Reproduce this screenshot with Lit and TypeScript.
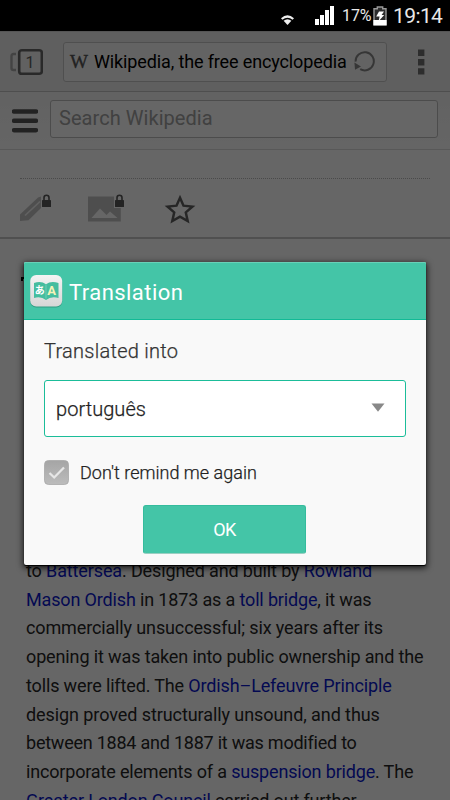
import { LitElement, html, css, svg } from 'lit';
import { customElement, property } from 'lit/decorators.js';
import { styleMap } from 'lit/directives/style-map.js';

type Run = string | { link: string };

interface Line {
  tracking: number;
  runs: Run[];
}

const ARTICLE: Line[] = [
  { tracking: -0.129, runs: ['to ', { link: 'Battersea' }, '. Designed and built by ', { link: 'Rowland' }] },
  { tracking: -0.155, runs: [{ link: 'Mason Ordish' }, ' in 1873 as a ', { link: 'toll bridge' }, ', it was'] },
  { tracking: -0.135, runs: ['commercially unsuccessful; six years after its'] },
  { tracking: -0.128, runs: ['opening it was taken into public ownership and the'] },
  { tracking: -0.145, runs: ['tolls were lifted. The ', { link: 'Ordish–Lefeuvre Principle' }] },
  { tracking: -0.08, runs: ['design proved structurally unsound, and thus'] },
  { tracking: -0.232, runs: ['between 1884 and 1887 it was modified to'] },
  { tracking: -0.17, runs: ['incorporate elements of a ', { link: 'suspension bridge' }, '. The'] },
  { tracking: -0.165, runs: [{ link: 'Greater London Council' }, ' carried out further'] },
];

const lock = (x: number) => svg`
  <rect x=${x} y="6" width="9" height="7" rx="0.6" fill="#585858" />
  <path d="M${x + 2} 6.5V3.8a2.5 2.5 0 0 1 5 0v2.7" fill="none" stroke="#585858" stroke-width="1.6" />
`;

/** Android status bar with wifi, signal, battery and clock. */
@customElement('status-bar')
export class StatusBar extends LitElement {
  static styles = css`
    :host {
      display: flex;
      box-sizing: border-box;
      height: 31px;
      padding-right: 8px;
      justify-content: flex-end;
      align-items: center;
      background: #000;
      color: #e8e8e8;
      font-family: Roboto, 'Liberation Sans', sans-serif;
    }

    svg {
      display: block;
      flex: none;
    }

    .wifi {
      margin: 9px 21px 0 0;
    }

    .signal {
      margin-right: 8px;
    }

    .percent {
      width: 31px;
      font-size: 16px;
      letter-spacing: -0.1px;
      white-space: nowrap;
    }

    .clock {
      width: 49px;
      margin-left: 6px;
      font-size: 21px;
      letter-spacing: -0.6px;
      white-space: nowrap;
    }
  `;

  render() {
    return html`
      <svg class="wifi" width="13" height="10" viewBox="0 0 13 10">
        <path d="M0 3.2Q6.5-2.6 13 3.2L11.6 4.8Q6.5 0.6 1.4 4.8Z" fill="#eee" />
        <path d="M2.6 5.7Q6.5 2.6 10.4 5.7L6.5 10Z" fill="#eee" />
      </svg>
      <svg class="signal" width="19" height="19" viewBox="0 0 19 19">
        <path d="M0 13h4v6H0zM5 9h4v10H5zM10 4h4v15h-4zM15 0h4v19h-4z" fill="#fff" />
      </svg>
      <span class="percent">17%</span>
      <svg width="14" height="20" viewBox="0 0 14 20">
        <path d="M1 2.8h3.3V1h5.4v1.8H13v16H1z" fill="#2b2b2b" stroke="#999" stroke-width="1.4" />
        <path d="M0.4 14h13.2v5.4H0.4z" fill="#fff" />
        <path d="M6 5.5h5L8.6 9h2.6l-5.6 6.3 1-4.8H3.2z" fill="#fff" />
      </svg>
      <span class="clock">19:14</span>
    `;
  }
}

/** The browser page that sits behind the dialog. */
@customElement('browser-page')
export class BrowserPage extends LitElement {
  static styles = css`
    :host {
      display: block;
      height: 769px;
      overflow: hidden;
      background: #fff;
      color: #262626;
      font-family: Roboto, 'Liberation Sans', sans-serif;
    }

    svg {
      display: block;
      flex: none;
    }

    .toolbar {
      display: flex;
      box-sizing: border-box;
      height: 61px;
      padding: 0 24px 0 10px;
      align-items: center;
      background: #ededed;
      border-top: 1px solid #d4d4d4;
      border-bottom: 1px solid #c2c2c2;
    }

    .url {
      display: flex;
      box-sizing: border-box;
      width: 324px;
      height: 40px;
      margin: 0 30px 0 20px;
      padding: 0 11px 0 6px;
      align-items: center;
      background: #f8f8f8;
      border: 1px solid #c6c6c6;
      border-radius: 3px;
    }

    .favicon {
      width: 24px;
      font: 19px/20px 'Liberation Serif', serif;
      -webkit-text-stroke: 0.4px #555;
      color: #555;
    }

    .title {
      flex: 1;
      font-size: 18px;
      letter-spacing: -0.13px;
      white-space: nowrap;
      color: #000;
    }

    .search {
      display: flex;
      box-sizing: border-box;
      height: 58px;
      padding: 0 12px;
      align-items: center;
      background: linear-gradient(#f4f4f4, #fdfdfd);
      border-bottom: 1px solid #dcdcdc;
    }

    .field {
      flex: 1;
      box-sizing: border-box;
      height: 38px;
      margin: -3px 0 0 12px;
      padding-left: 8px;
      background: #fff;
      border: 1px solid #bdbdbd;
      border-radius: 3px;
      font-size: 20px;
      line-height: 35px;
      letter-spacing: 0.05px;
      color: #a2a2a2;
    }

    .actions {
      box-sizing: border-box;
      height: 89px;
      padding: 28px 20px 0;
      border-bottom: 2px solid #c9c9c9;
    }

    .rule {
      border-top: 1px dotted #b8b8b8;
      margin-bottom: 15px;
    }

    .heading-edge {
      width: 4px;
      height: 4px;
      margin: 38px 0 0 21px;
      border-top: 2px solid #000;
      border-left: 2px solid #000;
      box-sizing: border-box;
    }

    .article {
      margin: 276px 0 0 26px;
      font-size: 18px;
      line-height: 28.7px;
      white-space: pre;
    }

    a {
      color: #0a18cc;
    }
  `;

  renderLine(line: Line) {
    return html`<div style=${styleMap({ letterSpacing: `${line.tracking}px` })}>${line.runs.map((run) =>
      typeof run === 'string' ? run : html`<a>${run.link}</a>`
    )}</div>`;
  }

  render() {
    return html`
      <div class="toolbar">
        <svg width="33" height="28" viewBox="0 0 33 28">
          <path d="M6 6H3.5Q1.5 6 1.5 8v12q0 2 2 2H6" fill="none" stroke="#a8a8a8" stroke-width="2.4" />
          <rect x="9.2" y="2.2" width="22.6" height="23.6" rx="2.6" fill="#f2f2f2" stroke="#686868" stroke-width="2.6" />
          <text x="20" y="19.5" text-anchor="middle" font-family="Roboto" font-size="16" fill="#606060">1</text>
        </svg>
        <div class="url">
          <span class="favicon">W</span>
          <span class="title">Wikipedia, the free encyclopedia</span>
          <svg width="21" height="21" viewBox="0 0 21 21">
            <path d="M1.6 10.6A9.1 9.1 0 1 1 6.2 18.2" fill="none" stroke="#888" stroke-width="2" />
            <path d="M0.4 11.6L1 18.8 7 15.4Z" fill="#888" />
          </svg>
        </div>
        <svg width="8" height="26" viewBox="0 0 8 26">
          <path d="M1 0.5h6.4v6.4H1zM1 10h6.4v6.4H1zM1 19.2h6.4v6.4H1z" fill="#707070" />
        </svg>
      </div>
      <div class="search">
        <svg width="26" height="24" viewBox="0 0 26 24">
          <path d="M2 2.5h22M2 11.8h22M2 21.2h22" stroke="#555" stroke-width="4.4" stroke-linecap="round" />
        </svg>
        <div class="field">Search Wikipedia</div>
      </div>
      <div class="actions">
        <div class="rule"></div>
        <svg width="180" height="30" viewBox="0 0 180 30">
          <path d="M0 27V20.5L18 3.5 21 2.5V14L8.5 26.2Z" fill="#c4c4c4" />
          <path d="M5 21.5L20 7.5" stroke="#f4f4f4" stroke-width="1.6" />
          ${lock(22)}
          <path d="M68 2.5h26V14h6.8v13.5H68z" fill="#c4c4c4" />
          <path d="M71.5 24L80 14.5l6.5 6.5 3.5-3.5 7.5 6.5z" fill="#fff" />
          ${lock(95)}
          <path
            d="M160 3.8l3.5 7.9 8.9 0.9-6.6 5.8 1.9 8.7-7.7-4.5-7.7 4.5 1.9-8.7-6.6-5.8 8.9-0.9z"
            fill="none"
            stroke="#606060"
            stroke-width="2.5"
          />
        </svg>
      </div>
      <div class="heading-edge"></div>
      <div class="article">${ARTICLE.map((line) => this.renderLine(line))}</div>
    `;
  }
}

@customElement('translation-dialog')
export class TranslationDialog extends LitElement {
  static styles = css`
    :host {
      display: block;
      box-sizing: border-box;
      width: 402px;
      height: 303px;
      background: #f9f9f9;
      border-radius: 2px;
      box-shadow: 0 2px 6px 1px rgb(0 0 0 / 75%), 0 1px 1px #000;
      overflow: hidden;
      font-family: Roboto, 'Liberation Sans', sans-serif;
      color: #222;
    }

    svg {
      display: block;
      flex: none;
    }

    header {
      display: flex;
      box-sizing: border-box;
      height: 58px;
      padding: 0 0 0 5px;
      gap: 6px;
      align-items: center;
      background: #44c5a7;
      border-top: 1px solid #68d1b8;
      border-bottom: 1px solid #12ba96;
      color: #fff;
      font-size: 22px;
      letter-spacing: 0.45px;
    }

    header span {
      padding-top: 3px;
    }

    .body {
      display: flex;
      flex-direction: column;
      padding: 17px 20px 0;
    }

    .label {
      font-size: 20px;
      font-weight: 300;
      line-height: 28px;
      letter-spacing: 0.26px;
      color: #333;
      -webkit-text-stroke: 0.25px #333;
    }

    .select {
      display: flex;
      box-sizing: border-box;
      height: 57px;
      margin-top: 15px;
      padding: 0 20px 0 11px;
      justify-content: space-between;
      align-items: center;
      background: #fff;
      border: 1px solid #1bbd99;
      border-radius: 3px;
      font-size: 20px;
      font-weight: 300;
      letter-spacing: 0.05px;
      -webkit-text-stroke: 0.25px #222;
    }

    .arrow {
      margin-top: -3px;
    }

    .remind {
      display: flex;
      height: 26px;
      margin-top: 22px;
      gap: 11px;
      align-items: center;
      font-size: 18px;
      font-weight: 300;
      letter-spacing: 0.02px;
      -webkit-text-stroke: 0.25px #222;
    }

    .ok {
      box-sizing: border-box;
      width: 163px;
      height: 49px;
      margin: 20px 100px 0 99px;
      padding: 0;
      align-self: flex-start;
      background: #44c5a7;
      border: 1px solid #35bc9d;
      border-bottom-color: #9bcfc2;
      border-radius: 3px;
      color: #fff;
      font: 18px/47px Roboto, 'Liberation Sans', sans-serif;
      letter-spacing: -0.6px;
    }
  `;

  @property({ type: String })
  language = 'português';

  render() {
    return html`
      <header>
        <svg width="34" height="34" viewBox="0 0 34 34">
          <defs>
            <linearGradient id="tile" x2="0" y2="1">
              <stop offset="0" stop-color="#f4f4f4" />
              <stop offset="1" stop-color="#d6d6d6" />
            </linearGradient>
          </defs>
          <rect x="1.2" y="2" width="32" height="31.6" rx="6" fill="#278b74" opacity="0.7" />
          <rect x="1.2" y="1" width="32" height="31.4" rx="6" fill="url(#tile)" />
          <path d="M5 9q7-2.5 12 1.2Q22 6.5 29.5 9v15q-7.5-2-12.5 2-5-4-12-2z" fill="#45bd9f" />
          <path d="M17 10.5v14" stroke="#79d3bd" stroke-width="0.8" />
          <text x="5.8" y="19.8" font-family="Noto Sans CJK JP" font-weight="bold" font-size="10" fill="#fff">あ</text>
          <text x="18.2" y="20.8" font-family="Roboto" font-weight="bold" font-size="13" fill="#f5f3b8">A</text>
        </svg>
        <span>Translation</span>
      </header>
      <div class="body">
        <div class="label">Translated into</div>
        <div class="select">
          <span>${this.language}</span>
          <svg class="arrow" width="14" height="9" viewBox="0 0 14 9">
            <path d="M0.5 0.5h13L7 8.7z" fill="#888" />
          </svg>
        </div>
        <div class="remind">
          <svg width="25" height="25" viewBox="0 0 25 25">
            <defs>
              <linearGradient id="box" x2="0" y2="1">
                <stop offset="0" stop-color="#a5a5a5" />
                <stop offset="1" stop-color="#bcbcbc" />
              </linearGradient>
            </defs>
            <rect x="0.5" y="0.5" width="24" height="24" rx="4" fill="url(#box)" stroke="#a8a8a8" stroke-width="0.8" />
            <path d="M5.5 13l4.7 4.5L20 7.5" fill="none" stroke="#e6e6e6" stroke-width="2.3" />
          </svg>
          <span>Don't remind me again</span>
        </div>
        <button class="ok">OK</button>
      </div>
    `;
  }
}

@customElement('app-root')
export class AppRoot extends LitElement {
  static styles = css`
    :host {
      display: block;
      position: relative;
      width: 450px;
      height: 800px;
      overflow: hidden;
    }

    .scrim {
      position: absolute;
      inset: 31px 0 0;
      background: rgb(0 0 0 / 60%);
    }

    translation-dialog {
      position: absolute;
      left: 24px;
      top: 262px;
    }
  `;

  render() {
    return html`
      <status-bar></status-bar>
      <browser-page></browser-page>
      <div class="scrim"></div>
      <translation-dialog></translation-dialog>
    `;
  }
}
